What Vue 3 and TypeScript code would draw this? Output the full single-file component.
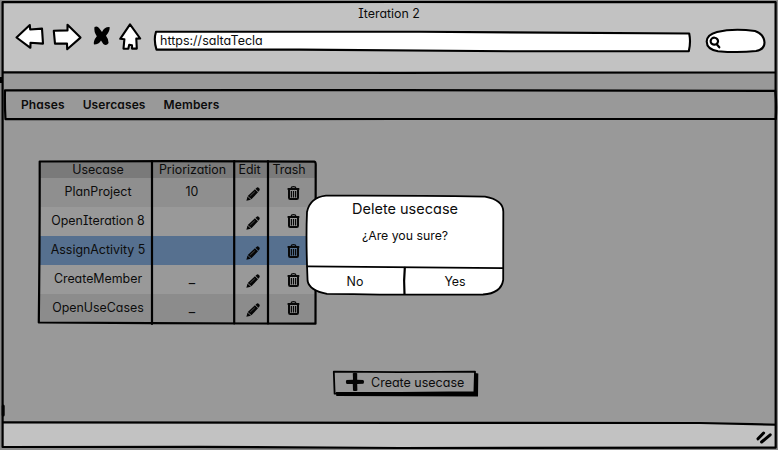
<script setup lang="ts">
interface Row {
  id: number
  name: string
  priority: string
  selected?: boolean
  cls: string
}

const tabs: string[] = ['Phases', 'Usercases', 'Members']
const rows: Row[] = [
  { id: 1, name: 'PlanProject', priority: '10', cls: 'r1' },
  { id: 2, name: 'OpenIteration 8', priority: '', cls: 'r2' },
  { id: 3, name: 'AssignActivity 5', priority: '', selected: true, cls: 'r3' },
  { id: 4, name: 'CreateMember', priority: '_', cls: 'r4' },
  { id: 5, name: 'OpenUseCases', priority: '_', cls: 'r5' },
]
</script>

<template>
  <div class="window">
    <header class="chrome">
      <div class="title">Iteration 2</div>
      <div class="toolbar">
        <svg class="nav-icons" width="128" height="34" viewBox="14 20 128 34">
          <path class="shape" d="M16.5 37.5 L29.8 25 L30.2 29.5 L42 28.6 L43 43.6 L30.5 42.8 L30.4 47.8 Z" />
          <path class="shape" d="M53.8 30.8 L67.5 30.4 L67.5 24.8 L80.5 37.6 L67.2 49.2 L67 43.6 L55 43.6 Z" />
          <path d="M94.5 27 Q97.3 25.4 99.4 28.4 L102 32 Q104.5 26.6 109.6 27 Q110.2 31 106 35.8 Q108.6 39 108.6 43 Q106.4 46.4 103.3 44 L101 40.6 Q99 44.6 94 44.6 Q93 41 96.8 36.2 Q93.6 31.5 94.5 27 Z" />
          <path class="shape" d="M130 24.3 L120.2 38.8 L124.4 39.2 L123.5 48.6 L128.3 48.7 L129.2 44.8 L132 45.2 L132 48.6 L136.8 48.6 L136.3 38.6 L140.2 38.5 Z" />
        </svg>
        <div class="address">
          <svg class="ink" width="540" height="26" viewBox="152 28 540 26">
            <path class="shape" d="M156 31.7 L420 31.8 L689.2 33.5 Q691 42 688.8 51.3 L520 51.3 L300 49.6 L156.5 49.6 Q153.4 40 156 31.7 Z" />
          </svg>
          <span class="url">https://saltaTecla</span>
        </div>
        <svg class="search" width="64" height="28" viewBox="703 27 64 28">
          <path class="shape" d="M717 32 Q733 28.2 755 31 Q764 34 764.5 42.5 Q764.5 49.5 756 51 Q738 53 718 51.2 Q706.8 49.5 706.7 41.5 Q707 34.5 717 32 Z" />
          <path class="line" d="M718 41.5 A3.7 3.5 0 1 0 714 44.7 A3.7 3.4 0 0 0 718 41.5 M716.5 44 L719.3 47.3" />
        </svg>
      </div>
    </header>

    <main class="page">
      <nav class="tabs">
        <a v-for="t in tabs" :key="t" class="tab">{{ t }}</a>
        <svg class="ink" width="776" height="34" viewBox="2 88 776 34">
          <path class="line" d="M5 90.3 L400 90.1 L775.3 90.8 Q776.8 104 775.8 119 L400 119 L5.5 119.2 Q4.6 104 5 90.3 Z" />
        </svg>
      </nav>

      <section class="table">
        <div class="row head">
          <span class="name">Usecase</span>
          <span class="prio">Priorization</span>
          <span class="edit">Edit</span>
          <span class="trash">Trash</span>
        </div>
        <div v-for="r in rows" :key="r.id" class="row" :class="[r.cls, { selected: r.selected }]">
          <span class="name">{{ r.name }}</span>
          <span class="prio" :class="{ blank: r.priority === '_' }">{{ r.priority }}</span>
          <span class="edit">
            <svg class="pencil" width="14" height="14" viewBox="0 0 14 14">
              <path d="M.4 13.8 L1.5 9.4 L4.9 12.7 Z" />
              <path d="M1.8 8.9 L8.9 2.2 L12 5.3 L5.4 12.3 Z" />
              <path d="M9.5 1.8 L11 .4 Q11.8 0 12.7 .8 L13.6 1.7 Q14 2.6 13.4 3.4 L12.4 4.8 Z" />
              <path class="shine" d="M4.2 9 L8.9 4.6" />
            </svg>
          </span>
          <span class="trash">
            <svg class="bin" width="13" height="14" viewBox="0 0 13 14">
              <path class="thin" d="M4 2.3 Q4.2 .6 6.5 .6 Q8.8 .6 9 2.3" />
              <path class="thick" d="M.6 3 H12.3 M2 3.5 V11.8 Q2 13 3.2 13 H9.8 Q11 13 11 11.8 V3.5" />
              <path class="thin" d="M4.4 5 V11.4 M6.5 5 V11.4 M8.6 5 V11.4" />
            </svg>
          </span>
        </div>
        <svg class="ink" width="282" height="168" viewBox="36 158 282 168">
          <path class="line" d="M39.7 161.5 L170 161.2 L314.3 161.6 Q316 162 315.7 166 L315.5 323.7 L150 323.2 L38.8 322.5 Q39.8 240 39.7 161.5 Z" />
          <path class="line" d="M152 161 V324 M234.2 161 V323.5 M268 161 V323.5" />
        </svg>
      </section>

      <button class="create" type="button">
        <svg class="ink" width="150" height="30" viewBox="331 369 150 30">
          <path d="M336 392 L474.5 392 L475 373 L478.3 373.4 L478 396.4 L336.3 396 Z" />
          <path class="line thinner" d="M333.8 371.6 L400 372.2 L475 371.6 L474.4 392.2 L400 393 L334.6 393.6 Z" />
        </svg>
        <svg class="plus" width="20" height="20" viewBox="0 0 20 20">
          <path d="M7.8 1.2 Q10 .4 12.2 1.2 L12.2 7.8 L18.3 8 Q19.9 9.7 18.4 11.8 L12.2 12 L12.4 18.6 Q10 19.6 8 18.6 L7.8 12.1 L1.6 11.9 Q.2 10 1.4 8.1 L8 7.8 Z" />
        </svg>
        <span class="caption">Create usecase</span>
      </button>

      <div class="dialog" role="dialog">
        <svg class="ink" width="202" height="104" viewBox="304 193 202 104">
          <path class="shape thinner" d="M326 195.7 Q410 195.4 485 196.6 Q503.5 200 503.3 212 L503.2 280 Q501 293.5 483 294.5 Q400 295 327 293.8 Q309.5 290.5 307.6 281 Q305.8 240 307 212 Q310 197.5 326 195.7 Z" />
          <path class="line thinner" d="M307.5 266.4 L503 268.2" />
          <path class="line" d="M404.8 267.8 Q403.6 280 404.5 294" />
        </svg>
        <h1>Delete usecase</h1>
        <p>¿Are you sure?</p>
        <div class="actions">
          <span class="no">No</span>
          <span class="yes">Yes</span>
        </div>
      </div>
    </main>

    <footer class="status">
      <svg class="grip" width="18" height="16" viewBox="755 429 18 16">
        <path d="M758 438.8 L763.6 433 M761.6 442 L770.2 434.8" />
      </svg>
    </footer>

    <svg class="frame" width="778" height="450" viewBox="0 0 778 450">
      <path class="line" d="M2.6 2.1 L400 2 L775.6 2.2 L775.7 447.6 L400 448 L200 446.8 L2.6 447 Z" />
      <path class="line" d="M3 72.3 L400 72.8 L775 72.5 M3 422.3 L400 422.8 L700 423 L775 424.6" />
      <path class="line thick" d="M3.2 406 V415" />
      <path d="M0 77 H3 V83 H0 Z" />
    </svg>
  </div>
</template>

<style>
body {
  margin: 0;
  background: #999;
}
</style>

<style scoped>
.window {
  position: relative;
  box-sizing: border-box;
  width: 778px;
  height: 450px;
  padding: 2px 2px 3px;
  display: flex;
  flex-direction: column;
  overflow: hidden;
  background: #8b8b8b;
  color: #0c0c0c;
  font: 12.4px/16px Inter, 'Noto Sans', sans-serif;
  font-feature-settings: 'cv11', 'cv08';
}
svg {
  display: block;
  flex: none;
}
.shape {
  fill: #fff;
  stroke: #000;
  stroke-width: 2.1;
  stroke-linejoin: round;
}
.line {
  fill: none;
  stroke: #000;
  stroke-width: 2.2;
  stroke-linejoin: round;
  stroke-linecap: round;
}
.thinner {
  stroke-width: 1.8;
}
.line.thick {
  stroke-width: 3;
}
.frame {
  position: absolute;
  left: 0;
  top: 0;
  pointer-events: none;
}
.ink {
  position: absolute;
}
.chrome {
  height: 71px;
  background: #c2c2c2;
}
.title {
  padding-top: 4px;
  text-align: center;
}
.toolbar {
  display: flex;
  align-items: flex-start;
  padding-left: 12px;
}
.nav-icons {
  margin-top: -2px;
}
.address {
  position: relative;
  width: 536px;
  height: 20px;
  margin: 8px 0 0 12px;
}
.address .ink {
  left: -2px;
  top: -2px;
}
.url {
  position: relative;
  display: block;
  padding: 3px 0 0 6px;
  font-size: 12.5px;
}
.search {
  margin: 5px 0 0 13px;
}
.page {
  position: relative;
  height: 350px;
  background: #999;
}
.tabs {
  position: relative;
  display: flex;
  box-sizing: border-box;
  height: 29px;
  top: 17px;
  padding: 7px 0 0 19px;
  gap: 18px;
  font-size: 12px;
  font-weight: 600;
  letter-spacing: 0.13px;
}
.tabs .ink {
  left: 0;
  top: -2px;
}
.table {
  position: relative;
  width: 277px;
  margin: 59px 0 0 37px;
}
.table .ink {
  left: -3px;
  top: -3px;
}
.row {
  display: grid;
  grid-template-columns: 113px 82px 34px 48px;
  height: 29px;
  align-items: center;
  text-align: center;
}
.row.r1 {
  background: #8f8f8f;
}
.row.r5 {
  background: #8c8c8c;
}
.row.r2,
.row.r4 {
  background: #999;
}
.row.head {
  height: 17px;
  padding-top: 1px;
  box-sizing: border-box;
  background: #7a7a7a;
}
.row.selected {
  background: #56708f;
}
.name {
  padding: 0 0 1px 5px;
}
.prio {
  padding: 0 2px 1px 0;
}
.prio.blank {
  padding-bottom: 3px;
  font-size: 14px;
}
.head .name {
  padding-bottom: 0;
}
.head .prio {
  padding: 0 1px 0 0;
}
.head .edit {
  padding-right: 3px;
}
.head .trash {
  padding-right: 6px;
}
.edit .pencil {
  margin: 2px auto 0 12px;
}
.trash .bin {
  margin: 0 auto 0 19px;
}
.r1 .bin,
.r3 .bin {
  margin-top: 1px;
}
.r2 .bin,
.r5 .bin {
  margin-top: -2px;
}
.r3 .pencil {
  margin-top: 4px;
}
.pencil path,
.plus path {
  fill: #050505;
}
.pencil .shine {
  fill: none;
  stroke: #777;
  stroke-width: 0.6;
}
.bin path {
  fill: none;
  stroke: #080808;
}
.bin .thin {
  stroke-width: 1.2;
}
.bin .thick {
  stroke-width: 2;
}
.create {
  position: relative;
  display: flex;
  align-items: center;
  box-sizing: border-box;
  width: 144px;
  height: 22px;
  margin: 48px 0 0 332px;
  padding: 0 0 0 11px;
  gap: 6px;
  border: 0;
  background: transparent;
  color: inherit;
  font: inherit;
  font-size: 12.5px;
  font-feature-settings: inherit;
  white-space: nowrap;
}
.create .ink {
  left: -3px;
  top: -2px;
}
.plus {
  position: relative;
}
.caption {
  padding-top: 2px;
}
.dialog {
  position: absolute;
  left: 305px;
  top: 122px;
  width: 196px;
  height: 100px;
  text-align: center;
}
.dialog .ink {
  left: -3px;
  top: -2px;
}
.dialog h1,
.dialog p,
.actions {
  position: relative;
  margin: 0;
}
.dialog h1 {
  padding-top: 4px;
  font-size: 14.5px;
  font-weight: 400;
  line-height: 20px;
}
.dialog p {
  padding-top: 9px;
  font-size: 12.3px;
}
.actions {
  display: grid;
  grid-template-columns: 96px 104px;
  padding-top: 30px;
}
.status {
  display: flex;
  justify-content: flex-end;
  height: 24px;
  background: #c2c2c2;
}
.grip {
  margin: 6px 3px 0 0;
}
.grip path {
  stroke: #000;
  stroke-width: 3;
  stroke-linecap: round;
}
</style>
